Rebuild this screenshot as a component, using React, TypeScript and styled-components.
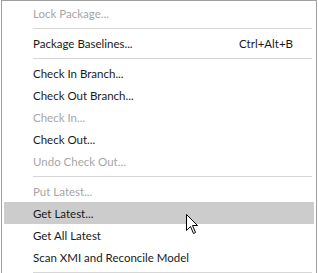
import React from "react";
import styled, { createGlobalStyle } from "styled-components";

type Item =
  | { kind: "sep" }
  | { kind: "item"; label: string; shortcut?: string; disabled?: boolean; hover?: boolean };

const items: Item[] = [
  { kind: "item", label: "Lock Package...", disabled: true },
  { kind: "sep" },
  { kind: "item", label: "Package Baselines...", shortcut: "Ctrl+Alt+B" },
  { kind: "sep" },
  { kind: "item", label: "Check In Branch..." },
  { kind: "item", label: "Check Out Branch..." },
  { kind: "item", label: "Check In...", disabled: true },
  { kind: "item", label: "Check Out..." },
  { kind: "item", label: "Undo Check Out...", disabled: true },
  { kind: "sep" },
  { kind: "item", label: "Put Latest...", disabled: true },
  { kind: "item", label: "Get Latest...", hover: true },
  { kind: "item", label: "Get All Latest" },
  { kind: "item", label: "Scan XMI and Reconcile Model" },
  { kind: "sep" },
];

export default function App() {
  return (
    <>
      <GlobalStyle />
      <Menu>
        {items.map((it, i) =>
          it.kind === "sep" ? (
            <Separator key={i} />
          ) : (
            <Row key={i} $disabled={it.disabled} $hover={it.hover}>
              <Label>{it.label}</Label>
              {it.shortcut && <Shortcut>{it.shortcut}</Shortcut>}
              {it.hover && (
                <Cursor width="13" height="21" viewBox="0 0 13 21">
                  <path
                    d="M0.5 0.5 L0.5 16.5 L4.5 12.5 L7.5 19.5 L9.5 18.5 L6.5 11.5 L11.5 11.5 Z"
                    fill="#fff"
                    stroke="#000"
                    strokeWidth="1"
                    strokeLinejoin="miter"
                  />
                </Cursor>
              )}
            </Row>
          )
        )}
      </Menu>
    </>
  );
}

const GlobalStyle = createGlobalStyle`
  html, body {
    margin: 0;
    padding: 0;
    background: #fff;
    width: 318px;
    height: 273px;
    overflow: hidden;
  }
`;

const Menu = styled.div`
  margin-left: 1px;
  width: 316px;
  box-sizing: border-box;
  border: 1px solid #a0a0a0;
  border-bottom: none;
  padding: 1px 1px 0;
  background: #fff;
  font-family: Lato, "Noto Sans", sans-serif;
  font-size: 11.5px;
`;

const Row = styled.div<{ $disabled?: boolean; $hover?: boolean }>`
  position: relative;
  display: flex;
  align-items: center;
  height: 22px;
  margin: 0 1px;
  padding: 0 21px 0 29px;
  color: ${(p) => (p.$disabled ? "#a6a6a6" : "#1a1a1a")};
  background: ${(p) => (p.$hover ? "#cccccc" : "transparent")};
`;

const Label = styled.span`
  flex: 1;
  white-space: nowrap;
`;

const Shortcut = styled.span`
  white-space: nowrap;
`;

const Separator = styled.div`
  height: 8px;
  display: flex;
  align-items: center;
  padding: 0 3px 0 30px;

  &::after {
    content: "";
    flex: 1;
    height: 1px;
    background: #d7d7d7;
  }
`;

const Cursor = styled.svg`
  position: absolute;
  left: 182px;
  top: 12px;
`;
